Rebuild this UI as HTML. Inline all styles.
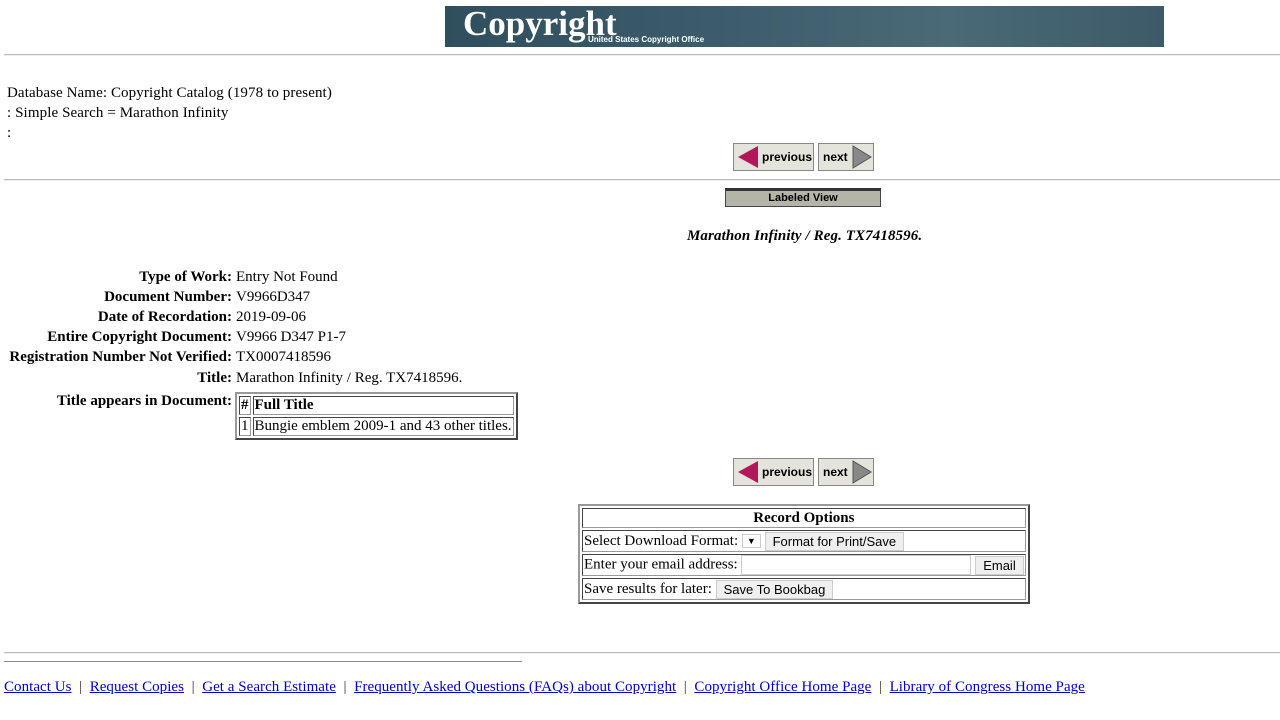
<!DOCTYPE html>
<html><head><meta charset="utf-8"><style>
body{margin:0;width:1280px;height:720px;background:#fff;font-family:"Liberation Serif",serif;font-size:15px;color:#000;position:relative;overflow:hidden}
.a{position:absolute;white-space:nowrap}
.hr{position:absolute;height:0;border-top:1px solid #bbb;border-bottom:1px solid #eee}
.nb{position:absolute;height:28px;background:#e4e4dc;border:1px solid #888;font-family:"Liberation Sans",sans-serif;font-weight:bold;font-size:12px;box-sizing:border-box}
.lab{text-align:right;font-weight:bold;width:232px;left:0}
.btn{display:inline-block;background:#efefef;border:1px solid #ccc;font-family:"Liberation Sans",sans-serif;font-size:13px;padding:1px 7px;vertical-align:middle}
table.t{border-collapse:separate;border:2px outset #999;border-spacing:2px}
table.t td{border:1px inset #999;padding:0 1px}
.tx{letter-spacing:0.1px}
</style></head><body>
<div class="a" style="left:445px;top:6px;width:719px;height:41px;background:linear-gradient(90deg,#2f4f5e,#3d5d6c 40%,#4a6a78 70%,#3d5a68)">
<span class="a" style="left:18px;top:-2px;font-family:'Liberation Serif',serif;font-weight:bold;font-size:35px;color:#fff">Copyright</span>
<span class="a" style="left:143px;top:29px;font-family:'Liberation Sans',sans-serif;font-weight:bold;font-size:8px;color:#fff">United States Copyright Office</span>
</div>
<div class="hr" style="left:4px;top:54px;width:1276px"></div>
<div class="a tx" style="left:7px;top:85px">Database Name: Copyright Catalog (1978 to present)</div>
<div class="a tx" style="left:7px;top:105px">: Simple Search = Marathon Infinity</div>
<div class="a" style="left:7px;top:125px">:</div>
<div class="nb" style="left:733px;top:143px;width:81px"><svg class="a" style="left:2px;top:1px" width="24" height="24"><polygon points="22,1 22,23 2,12" fill="#b0185a"/></svg><span class="a" style="left:28px;top:6px">previous</span></div>
<div class="nb" style="left:818px;top:143px;width:56px"><span class="a" style="left:4px;top:6px">next</span><svg class="a" style="left:32px;top:1px" width="22" height="24"><polygon points="2,1 2,23 20,12" fill="#888" stroke="#555"/></svg></div>
<div class="hr" style="left:4px;top:179px;width:1276px"></div>
<div class="a" style="left:725px;top:188px;width:156px;height:19px;background:#b4b4a8;border:1px solid #444;border-top:3px solid #333;box-sizing:border-box;text-align:center;font-family:'Liberation Sans',sans-serif;font-weight:bold;font-size:11px;line-height:14px">Labeled View</div>
<div class="a tx" style="left:687px;top:228px;font-weight:bold;font-style:italic">Marathon Infinity / Reg. TX7418596.</div>
<div class="a lab" style="top:269px">Type of Work:</div><div class="a" style="left:236px;top:269px">Entry Not Found</div>
<div class="a lab" style="top:289px">Document Number:</div><div class="a" style="left:236px;top:289px">V9966D347</div>
<div class="a lab" style="top:309px">Date of Recordation:</div><div class="a" style="left:236px;top:309px">2019-09-06</div>
<div class="a lab" style="top:329px">Entire Copyright Document:</div><div class="a" style="left:236px;top:329px">V9966 D347 P1-7</div>
<div class="a lab" style="top:349px">Registration Number Not Verified:</div><div class="a" style="left:236px;top:349px">TX0007418596</div>
<div class="a lab" style="top:370px">Title:</div><div class="a" style="left:236px;top:370px">Marathon Infinity / Reg. TX7418596.</div>
<div class="a lab" style="top:393px">Title appears in Document:</div>
<table class="t a" style="left:235px;top:392px"><tr><td><b>#</b></td><td style="width:256px"><b>Full Title</b></td></tr><tr><td>1</td><td>Bungie emblem 2009-1 and 43 other titles.</td></tr></table>
<div class="nb" style="left:733px;top:458px;width:81px"><svg class="a" style="left:2px;top:1px" width="24" height="24"><polygon points="22,1 22,23 2,12" fill="#b0185a"/></svg><span class="a" style="left:28px;top:6px">previous</span></div>
<div class="nb" style="left:818px;top:458px;width:56px"><span class="a" style="left:4px;top:6px">next</span><svg class="a" style="left:32px;top:1px" width="22" height="24"><polygon points="2,1 2,23 20,12" fill="#888" stroke="#555"/></svg></div>
<table class="t a" style="left:578px;top:504px;width:451px;border-spacing:2px">
<tr><td style="text-align:center;font-weight:bold;height:18px">Record Options</td></tr>
<tr><td style="height:20px">Select Download Format: <span class="btn" style="background:#fff;padding:1px 4px;font-size:9px">▼</span> <span class="btn">Format for Print/Save</span></td></tr>
<tr><td style="height:20px">Enter your email address: <span style="display:inline-block;width:228px;height:18px;border:1px solid #ccc;vertical-align:middle"></span> <span class="btn">Email</span></td></tr>
<tr><td style="height:20px">Save results for later: <span class="btn">Save To Bookbag</span></td></tr>
</table>
<div class="hr" style="left:4px;top:652px;width:1276px"></div>
<div class="a" style="left:4px;top:661px;width:518px;border-top:1px solid #888"></div>
<div class="a" style="left:4px;top:679px;color:#333;letter-spacing:0.04px">
<u style="color:#00c">Contact Us</u> &nbsp;|&nbsp; <u style="color:#00c">Request Copies</u> &nbsp;|&nbsp; <u style="color:#00c">Get a Search Estimate</u> &nbsp;|&nbsp; <u style="color:#00c">Frequently Asked Questions (FAQs) about Copyright</u> &nbsp;|&nbsp; <u style="color:#00c">Copyright Office Home Page</u> &nbsp;|&nbsp; <u style="color:#00c">Library of Congress Home Page</u></div>
</body></html>
